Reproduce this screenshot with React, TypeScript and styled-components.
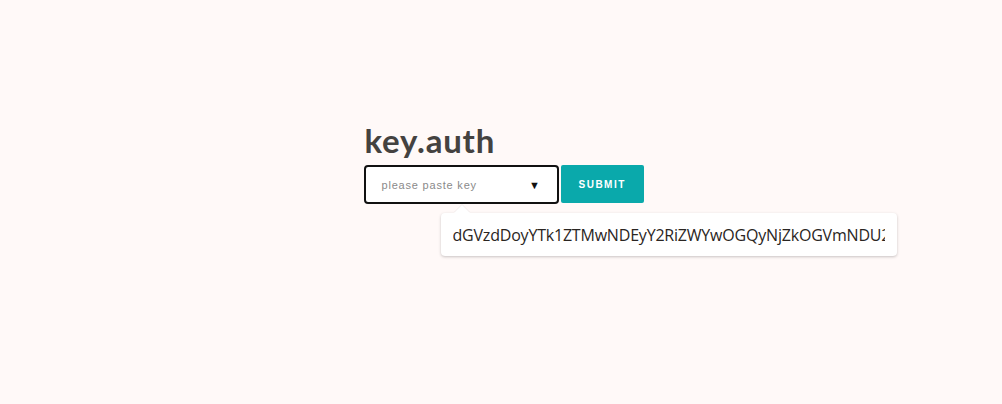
import React from "react";
import styled, { createGlobalStyle } from "styled-components";

const Global = createGlobalStyle`
  html, body { margin: 0; padding: 0; background: #fff9f8; }
  body { font-family: "Liberation Sans", Arial, sans-serif; }
`;

const Page = styled.div`
  width: 1002px;
  height: 404px;
  display: flex;
  justify-content: center;
  padding-top: 121px;
  box-sizing: border-box;
`;

const Column = styled.div`
  width: 280px;
  margin-left: 5px;
  display: flex;
  flex-direction: column;
`;

const Title = styled.h1`
  margin: 0 0 6px 1px;
  font-family: Lato, "Open Sans", sans-serif;
  font-weight: 700;
  font-size: 33px;
  line-height: 38px;
  letter-spacing: 0.8px;
  color: #444240;
`;

const Form = styled.div`
  display: flex;
  align-items: stretch;
  gap: 2px;
  position: relative;
`;

const Select = styled.div`
  width: 196px;
  height: 39px;
  box-sizing: border-box;
  border: 2px solid #111;
  border-radius: 4px;
  background: #fff;
  display: flex;
  align-items: center;
  justify-content: space-between;
  padding: 0 17px 0 16px;
`;

const Placeholder = styled.span`
  font-size: 11px;
  letter-spacing: 0.8px;
  color: #8a8a8a;
`;

const Caret = styled.span`
  font-size: 11px;
  color: #111;
`;

const Submit = styled.button`
  width: 83px;
  height: 38px;
  border: none;
  border-radius: 2px;
  background: #0aa9ab;
  color: #fff;
  font-family: "Liberation Sans", Arial, sans-serif;
  font-weight: 700;
  font-size: 10px;
  letter-spacing: 1.5px;
  padding: 0;
`;

const Popup = styled.div`
  position: absolute;
  left: 77px;
  top: 48px;
  width: 456px;
  height: 43px;
  box-sizing: border-box;
  background: #fff;
  border-radius: 4px;
  box-shadow: 0 1px 3px rgba(0, 0, 0, 0.22);
  padding: 0 12px;
  display: flex;
  align-items: center;
  &::before {
    content: "";
    position: absolute;
    left: 13px;
    top: -8px;
    width: 0;
    height: 0;
    border-left: 8px solid transparent;
    border-right: 8px solid transparent;
    border-bottom: 8px solid #fff;
    filter: drop-shadow(0 -1px 0 rgba(0, 0, 0, 0.05));
  }
`;

const KeyText = styled.div`
  overflow: hidden;
  white-space: nowrap;
  width: 100%;
  font-family: "Open Sans", Lato, sans-serif;
  font-size: 16px;
  letter-spacing: -0.2px;
  color: #2a2522;
`;

export default function App() {
  return (
    <>
      <Global />
      <Page>
        <Column>
          <Title>key.auth</Title>
          <Form>
            <Select>
              <Placeholder>please paste key</Placeholder>
              <Caret>▼</Caret>
            </Select>
            <Submit>SUBMIT</Submit>
            <Popup>
              <KeyText>dGVzdDoyYTk1ZTMwNDEyY2RiZWYwOGQyNjZkOGVmNDU2ZjkxMg==</KeyText>
            </Popup>
          </Form>
        </Column>
      </Page>
    </>
  );
}
